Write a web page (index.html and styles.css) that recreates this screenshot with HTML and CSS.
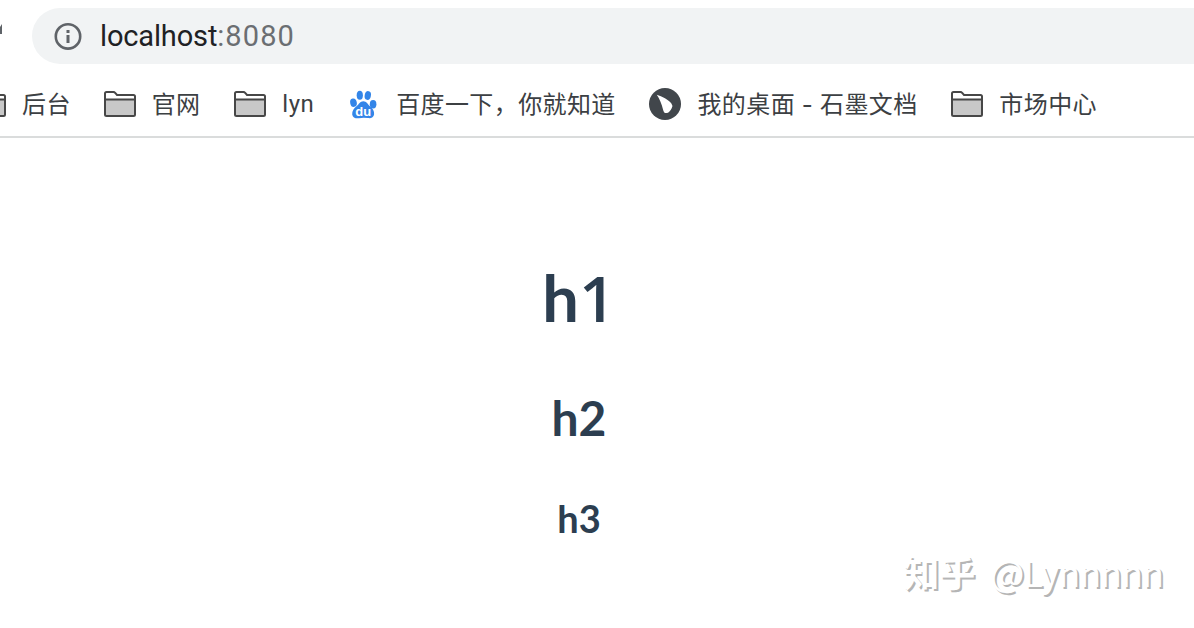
FILE: index.html
```
<!DOCTYPE html>
<html lang="zh-CN">
<head>
    <meta charset="UTF-8">
    <meta name="viewport" content="width=device-width, initial-scale=1.0">
    <title>localhost:8080</title>
    <link rel="stylesheet" href="styles.css">
</head>
<body>
    <!-- 文件夹图标 -->
    <svg class="symbols" width="0" height="0">
        <symbol id="folder" viewBox="0 0 32 26">
            <path d="M1 8.5H31V23.5Q31 25 29.5 25H2.5Q1 25 1 23.5Z" fill="#c8c8c8"/>
            <path d="M1 8.5V2.5Q1 1 2.5 1H9.5Q10.5 1 11.2 2L13 4H29.5Q31 4 31 5.5V23.5Q31 25 29.5 25H2.5Q1 25 1 23.5V8.5H31" fill="none" stroke="#474747" stroke-width="2"/>
        </symbol>
    </svg>

    <!-- 地址栏 -->
    <header class="toolbar">
        <span class="toolbar-mark"></span>
        <div class="address">
            <svg class="info" width="28" height="28" viewBox="0 0 28 28">
                <circle cx="14" cy="14.4" r="12.2" fill="none" stroke="#5f6368" stroke-width="2.6"/>
                <path d="M12.5 8H15.5V11H12.5ZM12.5 13H15.5V21H12.5Z" fill="#5f6368"/>
            </svg>
            <span class="host">localhost</span><span class="port">:8080</span>
        </div>
    </header>

    <!-- 书签栏 -->
    <nav class="bookmarks">
        <div class="bookmark">
            <svg class="icon" height="26"><use href="#folder"/></svg>
            <span>后台</span>
        </div>
        <div class="bookmark">
            <svg class="icon" height="26"><use href="#folder"/></svg>
            <span>官网</span>
        </div>
        <div class="bookmark">
            <svg class="icon" height="26"><use href="#folder"/></svg>
            <span class="latin">lyn</span>
        </div>
        <div class="bookmark">
            <svg class="icon" height="32" viewBox="0 0 32 32">
                <g fill="#3385e8">
                    <ellipse cx="5.5" cy="14.7" rx="3.3" ry="4.2" transform="rotate(-12 5.5 14.7)"/>
                    <ellipse cx="11.8" cy="7.3" rx="3.1" ry="4.5"/>
                    <ellipse cx="19.8" cy="7.5" rx="3.1" ry="4.4" transform="rotate(12 19.8 7.5)"/>
                    <ellipse cx="25.1" cy="16.2" rx="3.3" ry="4.2"/>
                    <path d="M15.3 13.3C18.5 13.3 19.8 16.3 22 18.3C24.5 20.5 26.5 23 26.1 26.3C25.7 29.7 22.7 30.7 20 30.1Q15.3 29.4 11 30.2C7.8 30.7 4.6 29.7 4.2 26.4C3.9 23 6.1 20.2 8.5 18.3C10.9 16.3 12.2 13.3 15.3 13.3Z"/>
                </g>
                <text class="du" x="15.2" y="27.8" text-anchor="middle">du</text>
            </svg>
            <span>百度一下，你就知道</span>
        </div>
        <div class="bookmark">
            <svg class="icon" height="32" viewBox="0 0 32 32">
                <circle cx="16" cy="16" r="16" fill="#41464b"/>
                <path d="M7.8 6.7C13 8.6 19.5 11.3 22.4 15.6Q24.3 18 22.7 20.2C21.5 22.3 19.7 25 17.5 25.1C15 25.2 14.5 23.3 14 21.4C12.8 16 10.6 11 7.8 6.7Z" fill="#fff"/>
            </svg>
            <span>我的桌面<span class="dash">-</span>石墨文档</span>
        </div>
        <div class="bookmark">
            <svg class="icon" height="26"><use href="#folder"/></svg>
            <span>市场中心</span>
        </div>
    </nav>

    <!-- 页面内容 -->
    <main class="content">
        <h1>h<span>1</span></h1>
        <h2>h2</h2>
        <h3>h3</h3>
    </main>

    <div class="watermark"><b>知乎</b> <span>@Lynnnnn</span></div>
</body>
</html>
```

FILE: styles.css
```
/* 全体样式 */
body {
    margin: 0;
    height: 628px;
    overflow: hidden;
    background: #fff;
    font-family: "Noto Sans CJK SC", sans-serif;
}
.symbols {
    position: absolute;
}

/* 地址栏 */
.toolbar {
    display: flex;
    height: 72px;
    padding-top: 8px;
    box-sizing: border-box;
}
.toolbar-mark {
    width: 2px;
    height: 10px;
    margin: 16px 30px 0 0;
    background: #5f6368;
    clip-path: polygon(100% 0, 100% 100%, 0 100%, 0 30%);
}
.address {
    display: flex;
    align-items: center;
    flex: 1;
    height: 56px;
    padding-left: 22px;
    border-radius: 28px 0 0 28px;
    background: #f1f3f4;
    font-family: Roboto, sans-serif;
    font-size: 29px;
    color: #202124;
}
.info {
    margin-right: 18px;
}
.host {
    letter-spacing: -0.15px;
}
.port {
    color: #6b6e72;
    letter-spacing: 1.1px;
}

/* 书签栏 */
.bookmarks {
    display: flex;
    align-items: center;
    gap: 33.7px;
    height: 64px;
    margin-left: -26px;
    border-bottom: 2px solid #dadcdc;
    font-size: 24px;
    letter-spacing: 0.4px;
    color: #3c4043;
    white-space: nowrap;
}
.bookmark {
    display: flex;
    align-items: center;
    flex: none;
    gap: 16px;
    line-height: 32px;
}
.bookmark:first-child {
    margin-right: -0.8px;
}
.bookmark > span {
    margin-top: -2px;
}
.bookmark > .latin {
    margin-top: 0;
    letter-spacing: 0.6px;
    font-family: Roboto, sans-serif;
}
.icon {
    width: 32px;
    flex: none;
}
.dash {
    display: inline-block;
    width: 25px;
    text-align: center;
    font-family: Inter, sans-serif;
    line-height: 1;
}
.du {
    font-family: "Liberation Sans", sans-serif;
    font-size: 13px;
    font-weight: 700;
    letter-spacing: 0;
    fill: #fff;
}

/* 标题 */
.content {
    width: 1158px;
    padding-top: 115px;
    font-family: Lato, sans-serif;
    text-align: center;
    color: #2c3e50;
}
h1, h2, h3 {
    margin: 0;
    font-weight: 700;
}
h1 {
    font-size: 65px;
    line-height: 88px;
}
h1 span {
    font-family: "Open Sans", sans-serif;
    font-size: 64px;
    font-weight: 600;
    line-height: 1;
}
h2 {
    margin-top: 44px;
    font-size: 48px;
    line-height: 66px;
}
h3 {
    margin-top: 42px;
    font-size: 38px;
    line-height: 50px;
}

/* 水印 */
.watermark {
    position: absolute;
    right: 31px;
    bottom: 31px;
    font-size: 36px;
    line-height: 52px;
    color: #fff;
    text-shadow: 2px 2px 0 #b5b5b5;
}
.watermark b {
    margin-right: 7px;
    font-weight: 700;
}
.watermark span {
    letter-spacing: -1px;
}
```
